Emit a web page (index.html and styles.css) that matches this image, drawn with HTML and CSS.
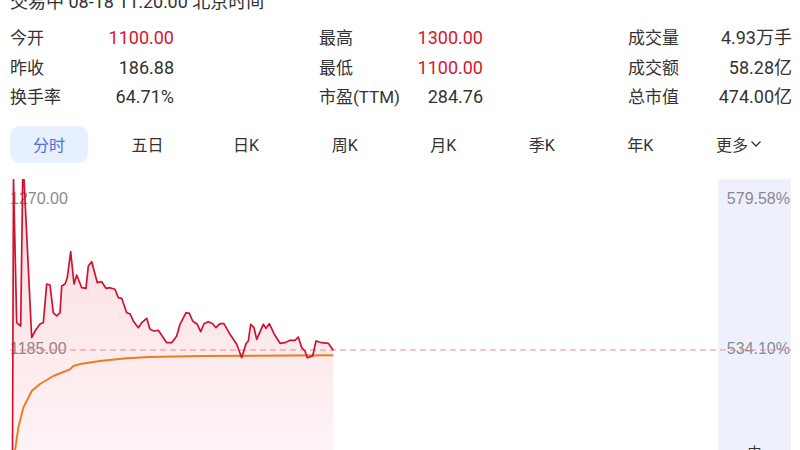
FILE: index.html
```html
<!DOCTYPE html>
<html lang="zh">
<head>
<meta charset="utf-8">
<link rel="stylesheet" href="styles.css">
</head>
<body>
<div class="page">
  <div class="status">交易中 08-18 11:20:00 北京时间</div>
  <div class="stats">
    <div class="col">
      <div class="row"><span class="lbl">今开</span><span class="val up">1100.00</span></div>
      <div class="row"><span class="lbl">昨收</span><span class="val">186.88</span></div>
      <div class="row"><span class="lbl">换手率</span><span class="val">64.71%</span></div>
    </div>
    <div class="col">
      <div class="row"><span class="lbl">最高</span><span class="val up">1300.00</span></div>
      <div class="row"><span class="lbl">最低</span><span class="val up">1100.00</span></div>
      <div class="row"><span class="lbl">市盈(TTM)</span><span class="val">284.76</span></div>
    </div>
    <div class="col">
      <div class="row"><span class="lbl">成交量</span><span class="val">4.93万手</span></div>
      <div class="row"><span class="lbl">成交额</span><span class="val">58.28亿</span></div>
      <div class="row"><span class="lbl">总市值</span><span class="val">474.00亿</span></div>
    </div>
  </div>
  <div class="tabs">
    <div class="tab active">分时</div>
    <div class="tab">五日</div>
    <div class="tab">日K</div>
    <div class="tab">周K</div>
    <div class="tab">月K</div>
    <div class="tab">季K</div>
    <div class="tab">年K</div>
    <div class="tab">更多<svg class="chev" width="12" height="8" viewBox="0 0 12 8"><path d="M1.5 1.5 L6 6 L10.5 1.5" fill="none" stroke="#333" stroke-width="1.3"/></svg></div>
  </div>
  <div class="chart">
    <div class="plot">
      <span class="axis axis-top">1270.00</span>
      <span class="axis axis-mid">1185.00</span>
    </div>
    <div class="side">
      <span class="axis-r axis-top">579.58%</span>
      <span class="axis-r axis-mid">534.10%</span>
      <span class="side-foot">中</span>
    </div>
    <svg class="lines" width="800" height="272" viewBox="0 0 800 272">
      <defs>
        <linearGradient id="fillg" x1="0" y1="0" x2="0" y2="1">
          <stop offset="0" stop-color="#e8344c" stop-opacity="0.17"/>
          <stop offset="1" stop-color="#e8344c" stop-opacity="0.06"/>
        </linearGradient>
      </defs>
      <path fill="url(#fillg)" d="M12.5,272 L13.5,0 L16.7,143.7 L20.7,147 L22.7,0 L24,0 L31.7,158.7 L35,152 L40,145 L43.3,143.7 L46.7,105 L50,106 L53.3,133.7 L56.7,137 L60,133.7 L61.7,107 L65,105 L67.3,98.7 L70.7,72.7 L74,105 L76.7,96 L81.7,108.7 L86,109.3 L88.3,87 L91.7,82.7 L97.3,103.7 L101.7,102.7 L106,109.3 L110,108.7 L115,110.3 L118.3,118.7 L121.7,119.3 L126.7,133.7 L130,134.7 L133.3,142 L138.3,148.7 L141.7,143.7 L146.7,139.3 L150,150.3 L154,152 L158.3,151.3 L163.3,158.7 L166.7,163.7 L171.7,163.7 L176.7,157 L180,145.3 L186,133.7 L189.3,134.3 L192.7,142 L197.3,145.3 L200.7,152.7 L204,144.7 L208.3,142.7 L212.7,144.7 L216,148.7 L220,144.7 L224,144.7 L230,155.3 L236.7,165.3 L241.7,178.7 L246,164.7 L248.3,162 L250.7,145.3 L254,148.7 L256.7,160.3 L263.3,145.3 L266,149.3 L269.3,144.7 L274,154.7 L280,164.3 L285,163.7 L290,161.3 L295,161.3 L298.3,158 L301.7,168.7 L305,172 L307.3,178.7 L312.7,177 L316,162 L321.7,163.7 L328.3,164.3 L333.3,171.3 L333.3,272 Z"/>
      <line x1="10" y1="171" x2="791" y2="171" stroke="#e98a9a" stroke-width="1" stroke-dasharray="6 4"/>
      <path fill="none" stroke="#f07a1c" stroke-width="1.9" stroke-linejoin="round" d="M15,272 L18.3,248.7 L23.3,228.7 L31.7,212 L40,205 L53.3,197 L70,190.3 L73.3,187 L81.7,184.7 L100,182 L126.7,179.3 L150,178 L200,177 L333.3,176.3"/>
      <path fill="none" stroke="#d01230" stroke-width="1.7" stroke-linejoin="round" d="M12.5,272 L13.5,0 L16.7,143.7 L20.7,147 L22.7,0 L24,0 L31.7,158.7 L35,152 L40,145 L43.3,143.7 L46.7,105 L50,106 L53.3,133.7 L56.7,137 L60,133.7 L61.7,107 L65,105 L67.3,98.7 L70.7,72.7 L74,105 L76.7,96 L81.7,108.7 L86,109.3 L88.3,87 L91.7,82.7 L97.3,103.7 L101.7,102.7 L106,109.3 L110,108.7 L115,110.3 L118.3,118.7 L121.7,119.3 L126.7,133.7 L130,134.7 L133.3,142 L138.3,148.7 L141.7,143.7 L146.7,139.3 L150,150.3 L154,152 L158.3,151.3 L163.3,158.7 L166.7,163.7 L171.7,163.7 L176.7,157 L180,145.3 L186,133.7 L189.3,134.3 L192.7,142 L197.3,145.3 L200.7,152.7 L204,144.7 L208.3,142.7 L212.7,144.7 L216,148.7 L220,144.7 L224,144.7 L230,155.3 L236.7,165.3 L241.7,178.7 L246,164.7 L248.3,162 L250.7,145.3 L254,148.7 L256.7,160.3 L263.3,145.3 L266,149.3 L269.3,144.7 L274,154.7 L280,164.3 L285,163.7 L290,161.3 L295,161.3 L298.3,158 L301.7,168.7 L305,172 L307.3,178.7 L312.7,177 L316,162 L321.7,163.7 L328.3,164.3 L333.3,171.3"/>
    </svg>
  </div>
</div>
</body>
</html>
```
FILE: styles.css
```css
html, body {
  margin: 0;
  padding: 0;
  background: #fff;
}
.page {
  width: 800px;
  height: 450px;
  overflow: hidden;
  font-family: Roboto, "Noto Sans CJK SC", sans-serif;
  color: #333;
}
.status {
  margin-top: -10px;
  padding-left: 10px;
  font-size: 18px;
  line-height: 23px;
  height: 22px;
}
.stats {
  display: grid;
  grid-template-columns: 164px 164px 164px;
  column-gap: 145px;
  padding-left: 10px;
  margin-top: 11px;
}
.row {
  display: flex;
  justify-content: space-between;
  align-items: baseline;
  font-size: 17px;
  line-height: 29.5px;
  height: 29.5px;
}
.lbl {
  color: #333;
}
.val {
  color: #333;
  font-size: 18px;
}
.val.up {
  color: #d9142c;
}
.tabs {
  display: flex;
  justify-content: space-between;
  width: 768px;
  margin-left: 10px;
  margin-top: 14px;
  height: 37px;
}
.tab {
  width: 78px;
  height: 37px;
  display: flex;
  align-items: center;
  justify-content: center;
  font-size: 16px;
  color: #333;
  border-radius: 10px;
}
.tab.active {
  background: #e6f0fe;
  color: #4c6fdc;
}
.chev {
  margin-left: 2px;
}
.chart {
  position: relative;
  display: flex;
  height: 272px;
  margin-top: 16px;
}
.plot {
  position: relative;
  flex: 1;
}
.side {
  position: relative;
  width: 73px;
  margin-right: 9px;
  background: #eef0fd;
}
.axis, .axis-r {
  position: absolute;
  font-family: "Liberation Sans", Arial, sans-serif;
  font-size: 16px;
  line-height: 20px;
  color: #8a8a8a;
}
.axis {
  left: 10px;
}
.axis-r {
  right: 1px;
}
.axis-top {
  top: 10px;
}
.axis-mid {
  top: 160px;
}
.side-foot {
  position: absolute;
  left: 0;
  right: 0;
  top: 265px;
  text-align: center;
  font-size: 14px;
  line-height: 16px;
  color: #333;
}
.lines {
  position: absolute;
  left: 0;
  top: 0;
  pointer-events: none;
}
```
